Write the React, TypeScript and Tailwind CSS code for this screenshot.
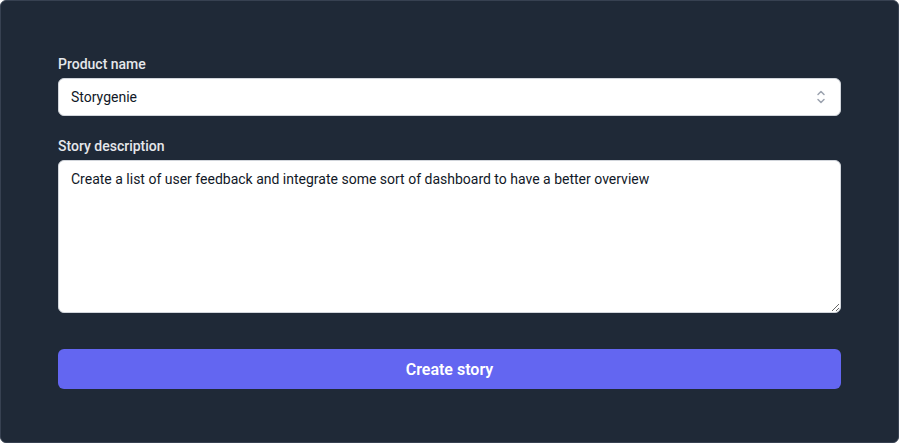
import { useState } from "react"

function UpDownIcon() {
  return (
    <svg viewBox="0 0 20 20" fill="none" className="h-5 w-5 text-[#9ca3af]" aria-hidden="true">
      <path d="M7 7.5l3-3 3 3M7 12.5l3 3 3-3" stroke="currentColor" strokeWidth="1.5" strokeLinecap="round" strokeLinejoin="round" />
    </svg>
  )
}

export default function App() {
  const [product, setProduct] = useState("Storygenie")
  const [description, setDescription] = useState(
    "Create a list of user feedback and integrate some sort of dashboard to have a better overview"
  )

  return (
    <div className="h-[443px] w-[899px] bg-white font-['Roboto',sans-serif]">
      <div className="h-full rounded-md border border-[#374151] bg-[#1f2937] px-[57px] pt-[53px] pb-[52px]">
        <form className="flex flex-col" onSubmit={(e) => e.preventDefault()}>
          <label htmlFor="product" className="block text-sm font-medium leading-5 text-[#e5e7eb]">
            Product name
          </label>
          <div className="relative mt-1">
            <select
              id="product"
              value={product}
              onChange={(e) => setProduct(e.target.value)}
              className="block w-full appearance-none rounded-md border border-[#d1d5db] bg-white py-2 pr-10 pl-3 text-sm leading-5 text-[#111827] outline-none"
            >
              <option>Storygenie</option>
              <option>Feedback Hub</option>
            </select>
            <span className="pointer-events-none absolute inset-y-0 right-0 flex items-center pr-2.5">
              <UpDownIcon />
            </span>
          </div>

          <label htmlFor="description" className="mt-5 block text-sm font-medium leading-5 text-[#e5e7eb]">
            Story description
          </label>
          <textarea
            id="description"
            value={description}
            onChange={(e) => setDescription(e.target.value)}
            className="mt-1 block h-[153px] w-full rounded-md border border-[#d1d5db] bg-white px-3 py-2 text-sm leading-5 text-[#111827] outline-none"
          />

          <button
            type="submit"
            className="mt-9 flex h-10 w-full items-center justify-center rounded-md bg-[#6366f1] pt-0.5 text-base font-semibold text-white"
          >
            Create story
          </button>
        </form>
      </div>
    </div>
  )
}
